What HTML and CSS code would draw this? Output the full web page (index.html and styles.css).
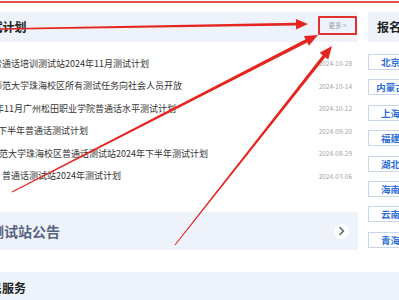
FILE: index.html
```html
<!DOCTYPE html>
<html lang="zh">
<head>
<meta charset="utf-8">
<link rel="stylesheet" href="styles.css">
</head>
<body>
<div class="page">
  <div class="row">
    <div class="main">
      <div class="panel-head">
        <h2 class="title"><span class="title-text">试计划</span></h2>
        <a class="more">更多 &gt;</a>
      </div>
      <ul class="list">
        <li class="item i1"><span class="t">普通话培训测试站2024年11月测试计划</span><span class="d">2024-10-28</span></li>
        <li class="item i2"><span class="t">师范大学珠海校区所有测试任务向社会人员开放</span><span class="d">2024-10-14</span></li>
        <li class="item i3"><span class="t">年11月广州松田职业学院普通话水平测试计划</span><span class="d">2024-10-12</span></li>
        <li class="item i4"><span class="t">下半年普通话测试计划</span><span class="d">2024-09-20</span></li>
        <li class="item i5"><span class="t">范大学珠海校区普通话测试站2024年下半年测试计划</span><span class="d">2024-08-29</span></li>
        <li class="item i6"><span class="t">普通话测试站2024年测试计划</span><span class="d">2024-03-06</span></li>
      </ul>
      <div class="notice">
        <span class="notice-text">测试站公告</span>
        <span class="chev"><svg width="8" height="10" viewBox="0 0 8 10"><path d="M2 1.5 L5.5 5 L2 8.5" fill="none" stroke="#666" stroke-width="1.6" stroke-linecap="round" stroke-linejoin="round"/></svg></span>
      </div>
    </div>
    <aside class="side">
      <div class="side-head"><h2 class="side-title">报名</h2></div>
      <div class="regions">
        <a class="region">北京</a>
        <a class="region">内蒙古</a>
        <a class="region">上海</a>
        <a class="region">福建</a>
        <a class="region">湖北</a>
        <a class="region">海南</a>
        <a class="region">云南</a>
        <a class="region">青海</a>
      </div>
    </aside>
  </div>
  <div class="services"><h2 class="services-title">民服务</h2></div>

  <div class="redline"></div>
  <svg class="arrows" width="399" height="300" viewBox="0 0 399 300">
    <polygon fill="#e52620" points="-0.01,28.2 295.98,22.8 295.92,18.9 308,24 296.08,29.4 296.02,25.6 0.01,29.8"/>
    <polygon fill="#e52620" points="11.77,191.56 305.63,39.37 303.92,36.04 318,35 308.94,45.82 307.23,42.49 12.23,192.44"/>
    <polygon fill="#e52620" points="174.61,244.69 322.58,55.13 319.63,52.80 332,46 328.27,59.62 325.32,57.29 175.39,245.31"/>
  </svg>
</div>
</body>
</html>
```

FILE: styles.css
```css
* { box-sizing: border-box; }
html, body { margin: 0; padding: 0; background: #fff; }
body {
  font-family: "Noto Sans CJK SC", "Noto Sans", sans-serif;
  width: 399px;
  height: 300px;
  overflow: hidden;
}
.page {
  position: relative;
  width: 399px;
  height: 300px;
  padding-top: 12px;
  overflow: hidden;
}
.row {
  display: flex;
  gap: 10px;
  align-items: flex-start;
}
.main {
  flex: none;
  width: 358px;
  overflow: hidden;
}
.panel-head {
  height: 30px;
  background: #eef3fb;
  display: flex;
  align-items: center;
  justify-content: space-between;
}
.title {
  margin: 0;
  font-size: 12px;
  font-weight: 700;
  color: #222;
  line-height: 1;
}
.title-text { display: block; margin-left: -9.5px; }
.more {
  width: 39px;
  height: 19px;
  margin-right: 1px;
  margin-top: -4px;
  border: 2px solid #e0322c;
  border-radius: 1px;
  display: flex;
  align-items: center;
  justify-content: center;
  font-size: 6.5px;
  color: #9aa0a8;
}
.list {
  list-style: none;
  margin: 0;
  padding: 10px 6px 0 0;
}
.item {
  height: 22.5px;
  display: flex;
  align-items: center;
  justify-content: space-between;
  white-space: nowrap;
}
.t {
  font-size: 9px;
  color: #333;
}
.d {
  font-size: 6.5px;
  color: #a6a6a6;
}
.i1 .t, .i2 .t { margin-left: -7px; }
.i3 .t { margin-left: -5px; }
.i4 .t { margin-left: -2px; }
.i5 .t { margin-left: -1px; }
.i6 .t { margin-left: 2px; }
.notice {
  margin-top: 25px;
  height: 38px;
  background: #eef3fb;
  display: flex;
  align-items: center;
  justify-content: space-between;
  padding-right: 9px;
}
.notice-text {
  margin-left: -10px;
  font-size: 14px;
  font-weight: 700;
  color: #56627e;
}
.chev {
  width: 15px;
  height: 15px;
  border-radius: 50%;
  background: #fff;
  display: flex;
  align-items: center;
  justify-content: center;
}
.side {
  flex: 1;
  min-width: 0;
}
.side-head {
  height: 30px;
  background: #eef3fb;
  display: flex;
  align-items: center;
  padding-left: 9px;
}
.side-title {
  margin: 0;
  font-size: 12px;
  font-weight: 700;
  color: #222;
  white-space: nowrap;
  line-height: 1;
}
.regions {
  margin-top: 12px;
  display: flex;
  flex-direction: column;
  gap: 9.4px;
}
.region {
  width: 45px;
  height: 16px;
  border: 1px solid #c9d5e8;
  background: #fff;
  display: flex;
  align-items: center;
  justify-content: center;
  font-size: 9.5px;
  font-weight: 700;
  color: #2f6fd6;
  white-space: nowrap;
}
.services {
  margin-top: 22px;
  height: 40px;
  background: #eff4fc;
  padding-top: 10px;
}
.services-title {
  margin: 0 0 0 -10px;
  font-size: 12px;
  font-weight: 700;
  color: #222;
  line-height: 12px;
}
.redline {
  position: absolute;
  left: 0;
  top: 1px;
  width: 399px;
  height: 2px;
  background: #e2514c;
}
.arrows {
  position: absolute;
  left: 0;
  top: 0;
  pointer-events: none;
}
```
